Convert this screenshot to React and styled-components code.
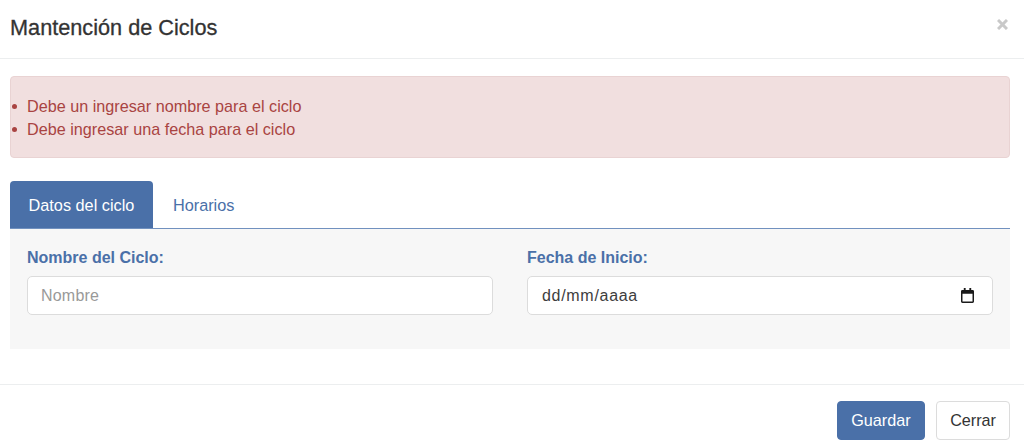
import React, { useState } from "react";
import styled, { createGlobalStyle } from "styled-components";

const GlobalStyle = createGlobalStyle`
  * { box-sizing: border-box; }
  html, body { margin: 0; background: #fff; }
  body {
    font-family: "Liberation Sans", Arial, sans-serif;
    font-size: 16px;
    line-height: 23px;
    color: #333;
  }
`;

const Modal = styled.div`
  width: 1024px;
  height: 448px;
  overflow: hidden;
  background: #fff;
`;

const Header = styled.header`
  display: flex;
  align-items: center;
  justify-content: space-between;
  height: 59px;
  padding: 0 16px 5px 10px;
  border-bottom: 1px solid #eceeef;
`;

const Title = styled.h4`
  margin: 1px 0 0;
  font-size: 21.7px;
  font-weight: 500;
  -webkit-text-stroke: 0.3px #333;
  color: #333;
`;

const CloseIcon = styled.svg`
  width: 11px;
  height: 11px;
  margin-top: -5px;
  stroke: #c9c9c9;
  stroke-width: 3;
`;

const Body = styled.div`
  height: 326px;
  padding: 17px 14px 0 10px;
  border-bottom: 1px solid #eceeef;
`;

const Alert = styled.ul`
  height: 82px;
  margin: 0 0 23px;
  padding: 18px 0 0 1px;
  background: #f1dfdf;
  border: 1px solid #e9d3d3;
  border-radius: 4px;
  font-size: 16.2px;
  color: #a94442;
  list-style: none;
`;

const AlertItem = styled.li`
  display: flex;
  align-items: center;
  gap: 10px;
  &::before {
    content: "";
    width: 5px;
    height: 5px;
    border-radius: 50%;
    background: #a94442;
  }
`;

const Tabs = styled.nav`
  display: flex;
  height: 48px;
  border-bottom: 1px solid #7191bf;
`;

const Tab = styled.button`
  height: 47px;
  padding: 2px 18.5px 0;
  border: 0;
  border-radius: 4px 4px 0 0;
  font: inherit;
  font-size: 16.3px;
  cursor: pointer;
  color: ${(p) => (p.$active ? "#fff" : "#4a70a8")};
  background: ${(p) => (p.$active ? "#4a70a8" : "transparent")};
  margin-right: ${(p) => (p.$active ? "1.5px" : "0")};
`;

const Panel = styled.section`
  display: grid;
  grid-template-columns: 466px 466px;
  column-gap: 34px;
  height: 120px;
  padding: 17px 17px 0;
  background: #f7f7f7;
`;

const Field = styled.div`
  display: flex;
  flex-direction: column;
`;

const Label = styled.label`
  height: 23px;
  margin-bottom: 7px;
  font-weight: 700;
  color: #4a70a8;
`;

const Input = styled.input`
  width: 100%;
  height: 39px;
  padding: 0 13px;
  background: #fff;
  border: 1px solid #dcdcdc;
  border-radius: 5px;
  font: inherit;
  letter-spacing: 0.2px;
  color: #333;
  &::placeholder { color: #999; opacity: 1; }
`;

const DateBox = styled.div`
  display: flex;
  align-items: center;
  justify-content: space-between;
  height: 39px;
  padding: 0 18px 0 14px;
  background: #fff;
  border: 1px solid #dcdcdc;
  border-radius: 5px;
  letter-spacing: 0.7px;
  color: #3d3d3d;
`;

const CalendarIcon = styled.svg`
  width: 13px;
  height: 15px;
`;

const Footer = styled.footer`
  display: flex;
  justify-content: flex-end;
  gap: 11px;
  padding: 16px 14px 0 0;
`;

const Button = styled.button`
  height: 39px;
  padding: 0 ${(p) => (p.$primary ? "13.5px" : "13px")};
  border: 1px solid ${(p) => (p.$primary ? "#4a70a8" : "#dcdcdc")};
  border-radius: 4px;
  font: inherit;
  font-size: 16.2px;
  color: ${(p) => (p.$primary ? "#fff" : "#333")};
  background: ${(p) => (p.$primary ? "#4a70a8" : "#fff")};
  cursor: pointer;
`;

export default function App() {
  const [tab, setTab] = useState("datos");

  return (
    <Modal>
      <GlobalStyle />
      <Header>
        <Title>Mantención de Ciclos</Title>
        <CloseIcon viewBox="0 0 11 11" aria-label="Cerrar">
          <path d="M1 1l9 9M10 1l-9 9" />
        </CloseIcon>
      </Header>
      <Body>
        <Alert>
          <AlertItem>Debe un ingresar nombre para el ciclo</AlertItem>
          <AlertItem>Debe ingresar una fecha para el ciclo</AlertItem>
        </Alert>
        <Tabs>
          <Tab $active={tab === "datos"} onClick={() => setTab("datos")}>
            Datos del ciclo
          </Tab>
          <Tab $active={tab === "horarios"} onClick={() => setTab("horarios")}>
            Horarios
          </Tab>
        </Tabs>
        <Panel>
          <Field>
            <Label htmlFor="nombre">Nombre del Ciclo:</Label>
            <Input id="nombre" placeholder="Nombre" />
          </Field>
          <Field>
            <Label>Fecha de Inicio:</Label>
            <DateBox>
              dd/mm/aaaa
              <CalendarIcon viewBox="0 0 14 16">
                <path
                  d="M3 0h2v2h4V0h2v2h1.5A1.5 1.5 0 0 1 14 3.5v11a1.5 1.5 0 0 1-1.5 1.5h-11A1.5 1.5 0 0 1 0 14.5v-11A1.5 1.5 0 0 1 1.5 2H3zM1.6 6v8.4h10.8V6z"
                  fill="#1a1a1a"
                  fillRule="evenodd"
                />
              </CalendarIcon>
            </DateBox>
          </Field>
        </Panel>
      </Body>
      <Footer>
        <Button $primary>Guardar</Button>
        <Button>Cerrar</Button>
      </Footer>
    </Modal>
  );
}
